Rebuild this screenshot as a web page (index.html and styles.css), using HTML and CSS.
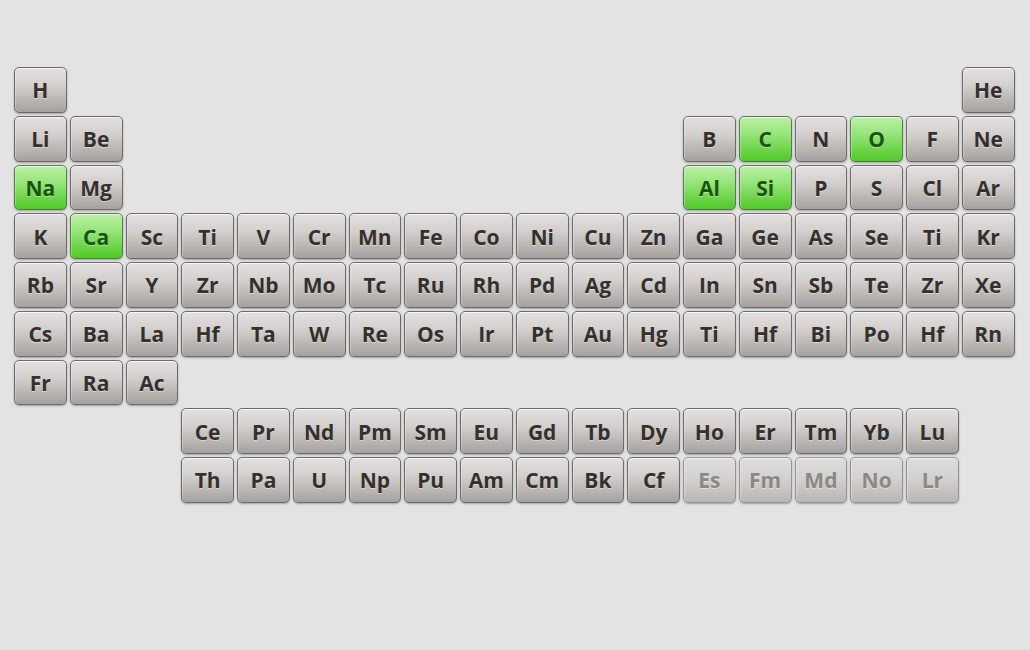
FILE: index.html
```html
<!DOCTYPE html>
<html>
<head>
<meta charset="utf-8">
<link rel="stylesheet" href="styles.css">
</head>
<body>
<div class="wrap">
<div class="table">
  <div class="el">H</div>
  <div class="el c18">He</div>

  <div class="el">Li</div>
  <div class="el">Be</div>
  <div class="el c13">B</div>
  <div class="el on">C</div>
  <div class="el">N</div>
  <div class="el on">O</div>
  <div class="el">F</div>
  <div class="el">Ne</div>

  <div class="el on">Na</div>
  <div class="el">Mg</div>
  <div class="el c13 on">Al</div>
  <div class="el on">Si</div>
  <div class="el">P</div>
  <div class="el">S</div>
  <div class="el">Cl</div>
  <div class="el">Ar</div>

  <div class="el">K</div>
  <div class="el on">Ca</div>
  <div class="el">Sc</div>
  <div class="el">Ti</div>
  <div class="el">V</div>
  <div class="el">Cr</div>
  <div class="el">Mn</div>
  <div class="el">Fe</div>
  <div class="el">Co</div>
  <div class="el">Ni</div>
  <div class="el">Cu</div>
  <div class="el">Zn</div>
  <div class="el">Ga</div>
  <div class="el">Ge</div>
  <div class="el">As</div>
  <div class="el">Se</div>
  <div class="el">Ti</div>
  <div class="el">Kr</div>

  <div class="el">Rb</div>
  <div class="el">Sr</div>
  <div class="el">Y</div>
  <div class="el">Zr</div>
  <div class="el">Nb</div>
  <div class="el">Mo</div>
  <div class="el">Tc</div>
  <div class="el">Ru</div>
  <div class="el">Rh</div>
  <div class="el">Pd</div>
  <div class="el">Ag</div>
  <div class="el">Cd</div>
  <div class="el">In</div>
  <div class="el">Sn</div>
  <div class="el">Sb</div>
  <div class="el">Te</div>
  <div class="el">Zr</div>
  <div class="el">Xe</div>

  <div class="el">Cs</div>
  <div class="el">Ba</div>
  <div class="el">La</div>
  <div class="el">Hf</div>
  <div class="el">Ta</div>
  <div class="el">W</div>
  <div class="el">Re</div>
  <div class="el">Os</div>
  <div class="el">Ir</div>
  <div class="el">Pt</div>
  <div class="el">Au</div>
  <div class="el">Hg</div>
  <div class="el">Ti</div>
  <div class="el">Hf</div>
  <div class="el">Bi</div>
  <div class="el">Po</div>
  <div class="el">Hf</div>
  <div class="el">Rn</div>

  <div class="el">Fr</div>
  <div class="el">Ra</div>
  <div class="el">Ac</div>
</div>

<div class="fblock">
  <div class="el">Ce</div>
  <div class="el">Pr</div>
  <div class="el">Nd</div>
  <div class="el">Pm</div>
  <div class="el">Sm</div>
  <div class="el">Eu</div>
  <div class="el">Gd</div>
  <div class="el">Tb</div>
  <div class="el">Dy</div>
  <div class="el">Ho</div>
  <div class="el">Er</div>
  <div class="el">Tm</div>
  <div class="el">Yb</div>
  <div class="el">Lu</div>

  <div class="el">Th</div>
  <div class="el">Pa</div>
  <div class="el">U</div>
  <div class="el">Np</div>
  <div class="el">Pu</div>
  <div class="el">Am</div>
  <div class="el">Cm</div>
  <div class="el">Bk</div>
  <div class="el">Cf</div>
  <div class="el off">Es</div>
  <div class="el off">Fm</div>
  <div class="el off">Md</div>
  <div class="el off">No</div>
  <div class="el off">Lr</div>
</div>
</div>
</body>
</html>
```

FILE: styles.css
```css
html, body {
  margin: 0;
  padding: 0;
  height: 100%;
}
body {
  background: #e4e3e3;
  font-family: "Open Sans", "DejaVu Sans", sans-serif;
}
.wrap {
  padding: 67px 0 0 14px;
  display: flex;
  flex-direction: column;
  gap: 3px;
}
.table, .fblock {
  display: grid;
  grid-auto-rows: 45.75px;
  column-gap: 3px;
  row-gap: 3px;
}
.table {
  grid-template-columns: repeat(18, 52.76px);
}
.fblock {
  grid-template-columns: repeat(14, 52.76px);
  margin-left: 167.28px;
}
.el {
  box-sizing: border-box;
  display: flex;
  align-items: center;
  justify-content: center;
  border: 1px solid #6f6a67;
  border-radius: 5px;
  background: linear-gradient(to bottom, #e3e1e0 0%, #d2cfcd 40%, #a5a19e 100%);
  box-shadow: inset 0 1px 0 rgba(255,255,255,0.7), inset 1px 0 0 rgba(255,255,255,0.25), 0 1px 2px rgba(0,0,0,0.3);
  color: #35302d;
  font-weight: 700;
  font-size: 21px;
  text-shadow: 0 1px 0 rgba(255,255,255,0.45);
  padding-top: 1px;
}
.c13 { grid-column: 13; }
.c18 { grid-column: 18; }
.on {
  background: linear-gradient(to bottom, #bcf1a8 0%, #95e479 40%, #4fc927 100%);
  border-color: #567f48;
  color: #1a5510;
  text-shadow: 0 1px 0 rgba(255,255,255,0.35);
}
.off {
  background: linear-gradient(to bottom, #dfdddc 0%, #d4d2d0 45%, #b9b6b3 100%);
  border-color: #979390;
  color: #8c8885;
}
```
